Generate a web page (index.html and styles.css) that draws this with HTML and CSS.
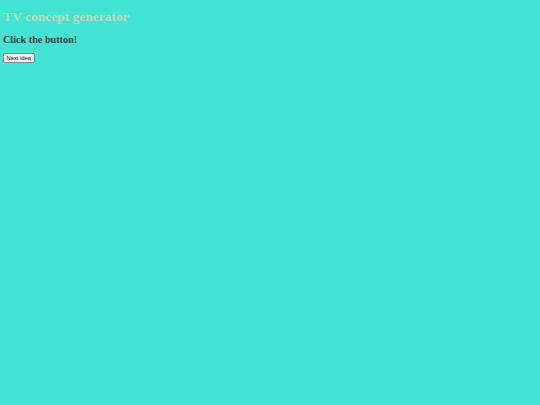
FILE: index.html
```html
<!DOCTYPE html>
<html lang="en">
  <head>
    <meta charset="UTF-8" />
    <meta name="viewport" content="width=device-width, initial-scale=1.0" />
    <title>TV concept generator</title>
    <link rel="stylesheet" href="styles.css">
  </head>
  <body>
    <h1 class="title">TV concept generator</h1>
    <h2 class="idea">Click the button!</h2>
    <button class="next">Next idea</button>
  </body>
</html>
```

FILE: styles.css
```css
body {
  margin: 3px;
  background: #44e4d4;
  font-family: "Liberation Serif", "Times New Roman", serif;
}

.title {
  color: #b6dfb4;
  font-size: 13.5px;
  margin: 6px 0 9px;
}

.idea {
  color: #23473c;
  font-size: 10.2px;
  margin: 8px 0;
}

.next {
  display: block;
  font-family: Arial, "Liberation Sans", sans-serif;
  font-size: 5.8px;
  line-height: 8px;
  padding: 0 2.5px;
  background: #f2f2f2;
  border: 1px solid #8a8a8a;
  border-radius: 1px;
  color: #111;
}
```
